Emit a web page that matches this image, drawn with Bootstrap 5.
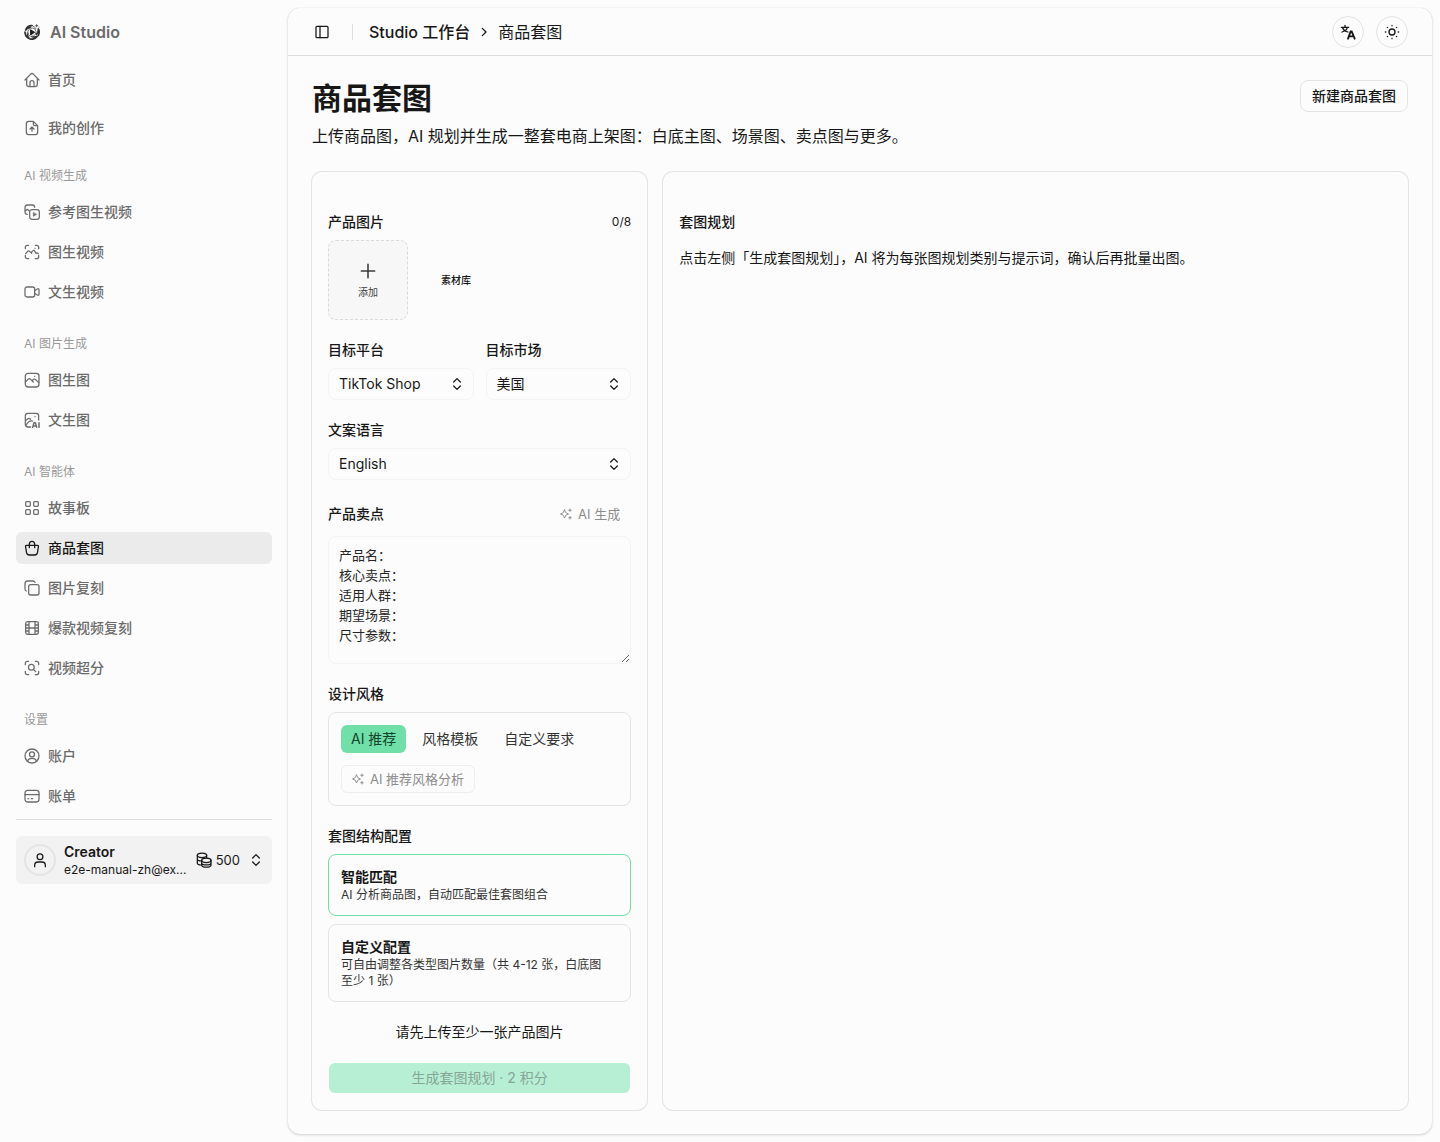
<!DOCTYPE html>
<html lang="zh-CN">
<head>
<meta charset="utf-8">
<meta name="viewport" content="width=device-width, initial-scale=1">
<title>商品套图 - AI Studio</title>
<link rel="stylesheet" href="https://cdn.jsdelivr.net/npm/bootstrap@5.3.0/dist/css/bootstrap.min.css">
<style>
:root{--ink:#171717;--soft:#6b6b6b;--faint:#999;--line:#e4e4e4;--page:#fcfcfc;--mint:#70e0a8}
body{background:var(--page);color:var(--ink);font-family:Inter,"Noto Sans CJK SC",sans-serif;font-size:14px;line-height:20px}
svg{display:block;flex:none;fill:none;stroke:currentColor;stroke-width:1.9;stroke-linecap:round;stroke-linejoin:round}
.i16{width:16px;height:16px}.i12{width:12px;height:12px}
.side-pane{flex:0 0 288px;padding:16px}
.brand-link{height:32px;padding:0 8px;gap:10px;font-size:16px;font-weight:600;color:var(--soft)}
.side-link{height:32px;padding:0 8px;gap:8px;border-radius:6px;color:var(--soft);font-weight:500}
.side-link.active{background:#ebebeb;color:var(--ink)}
.side-title{height:32px;line-height:32px;padding:0 8px;margin:0 0 4px;font-size:12px;font-weight:400;color:var(--faint)}
.side-nav{gap:16px}
.side-group+.side-group{margin-top:4px}
.side-rule{border-top:1px solid #dcdcdc;margin:7px 0 16px}
.user-box{height:48px;padding:0 8px;gap:8px;background:#f2f2f2;border:0;border-radius:6px;color:var(--ink)}
.user-pic{width:32px;height:32px;border-radius:50%;border:2px solid #e4e4e4}
.fs12{font-size:12px;line-height:16px}.fs13{font-size:13px}.fs16{font-size:16px;line-height:24px}
.medium{font-weight:500}
.main-pane{margin:8px 8px 8px 0;border-radius:12px;box-shadow:0 0 1px rgba(0,0,0,.18),0 1px 3px rgba(0,0,0,.16)}
.top-strip{height:48px;padding:0 24px 0 20px;border-bottom:1px solid #dedede}
.plain-btn{width:28px;height:28px;border:0;background:none;padding:0;color:var(--ink)}
.v-rule{width:1px;height:16px;background:#dedede;margin:0 16px}
.crumbs{gap:6px}
.gap12{gap:12px}
.round-btn{width:32px;height:32px;border:1px solid var(--line);border-radius:50%;background:var(--page);padding:0;color:var(--ink)}
.page-title{font-size:30px;line-height:36px;font-weight:700}
.line-btn{height:32px;padding:0 11px;border:1px solid var(--line);border-radius:8px;font-weight:500;font-size:14px;line-height:20px;color:var(--ink)}
.panels{display:grid;grid-template-columns:minmax(0,.45fr) minmax(0,1fr)}
.panel{border-radius:10px;box-shadow:0 0 0 1px var(--line);padding:40px 16px 16px}
.panel-form{gap:20px}
.field-name{font-size:14px;line-height:20px;font-weight:500;margin:0}
.tile{width:80px;height:80px;padding:0;font-size:10px;line-height:14px;border:0;background:none;color:var(--ink)}
.tile-add{border:1px dashed #d9d9d9;border-radius:8px;background:#f7f7f7;color:#3d3d3d}
.pick{height:32px;width:100%;appearance:none;border:1px solid #f3f3f3;border-radius:8px;background:var(--page);padding:0 32px 0 10px;font-size:14px;color:var(--ink)}
.pick-mark{right:9px;top:8px;pointer-events:none}
.notes{width:100%;height:128px;padding:8px 10px;border:1px solid #f3f3f3;border-radius:8px;background:var(--page);font-size:13px;line-height:20px;color:#262626}
.ai-btn{height:28px;padding:0 10px;gap:6px;border:1px solid transparent;border-radius:6px;background:none;font-size:13px;color:#8c8c8c}
.ai-btn.framed{border-color:#ededed}
.style-box{border:1px solid var(--line);border-radius:8px;padding:12px;gap:12px}
.segs{gap:6px}
.seg{height:28px;padding:0 10px;border:0;border-radius:6px;background:none;color:#333}
.seg.active{background:var(--mint);color:#14442c}
.choice{border:1px solid var(--line);border-radius:8px;padding:12px;background:none;text-align:left;color:#333}
.choice strong{font-weight:600;color:var(--ink);line-height:20px}
.choice.active{border-color:var(--mint)}
.go-btn{height:30px;margin:1px;border:0;border-radius:6px;background:#b7efd4;color:#86a596;font-size:14px}
</style>
</head>
<body>
<div class="d-flex align-items-stretch min-vh-100">

<aside class="side-pane d-flex flex-column">
  <a href="#" class="brand-link d-flex align-items-center text-decoration-none">
    <svg class="i16" viewBox="0 0 24 24">
      <g stroke="#333" stroke-width="2.600"><path d="M12 2.500Q5 2 2.500 9q3-4 7-3.500"/><path d="M1.500 12q0 7 6 9.500-3-3.500-2-8"/><path d="M9 22.500q7 1.500 11-4-4 2-8 .5"/><path d="M21.500 17q2.500-5 0-9.500.5 5-3 8"/></g>
      <path d="M14 3.500q3 1 4 3.500M16.500 7.500q3 4 .5 8t-7.500 3q-4-1.500-4-6 0-4 4-6 4-1.500 7 1" stroke="#777" stroke-width="1.500"/>
      <path d="M10 9v7l5.500-3.500z" fill="#222" stroke="#222"/><path d="M19 1v3M17.500 2.500h3M22.500 4.500v.1" stroke="#555" stroke-width="1.500"/>
    </svg>
    <span>AI Studio</span>
  </a>
  <nav class="side-nav d-flex flex-column mt-3">
    <a href="#" class="side-link d-flex align-items-center text-decoration-none"><svg class="i16" viewBox="0 0 24 24"><path d="M1.500 12 10 3.200q2-2 4 0L22.500 12M4 10v8.500q0 3.500 3.500 3.500h9q3.500 0 3.500-3.500V10M9 22v-6q0-3 3-3t3 3v6"/></svg>首页</a>
    <a href="#" class="side-link d-flex align-items-center text-decoration-none"><svg class="i16" viewBox="0 0 24 24"><path d="M14 2H7Q3.500 2 3.500 5.500v13Q3.500 22 7 22h10q3.500 0 3.500-3.500V8.500zM14 2v4q0 2.500 2.500 2.500h4M12 17v-6M9 13.500l3-3 3 3"/></svg>我的创作</a>
    <section class="side-group">
      <h2 class="side-title">AI 视频生成</h2>
      <div class="d-flex flex-column gap-2">
        <a href="#" class="side-link d-flex align-items-center text-decoration-none"><svg class="i16" viewBox="0 0 24 24"><path d="M5 15.500Q1.500 15.500 1.500 12V5Q1.500 1.500 5 1.500h7.500Q16 1.500 16 5M2 10.500l3-2.500 3 2"/><rect x="8.500" y="8.500" width="14.500" height="14.500" rx="3.500"/><path d="M14 13v5.500l4.500-2.700z" fill="currentColor" stroke-width="1"/></svg>参考图生视频</a>
        <a href="#" class="side-link d-flex align-items-center text-decoration-none"><svg class="i16" viewBox="0 0 24 24"><path d="M2 7V5q0-3 3-3h2M17 2h2q3 0 3 3v2M22 17v2q0 3-3 3h-2M7 22H5q-3 0-3-3v-2M2.500 14.500l3-3.500q1.500-1.500 3 0l3 3M11.500 12l2-2q1.500-1 2.500.5l2 3.500 1.500-1 2 1.500M16.500 6.500h.1"/></svg>图生视频</a>
        <a href="#" class="side-link d-flex align-items-center text-decoration-none"><svg class="i16" viewBox="0 0 24 24"><rect x="1.500" y="4.500" width="14.500" height="15" rx="3"/><path d="m16 10 4-2.500q2.500-1.200 2.500 1v7q0 2.200-2.500 1L16 14"/></svg>文生视频</a>
      </div>
    </section>
    <section class="side-group">
      <h2 class="side-title">AI 图片生成</h2>
      <div class="d-flex flex-column gap-2">
        <a href="#" class="side-link d-flex align-items-center text-decoration-none"><svg class="i16" viewBox="0 0 24 24"><rect x="2" y="2" width="20.500" height="20.500" rx="4"/><path d="m2 15 4-4q2-2 4 0l4 4M12 13l2.500-2q1.500-1 3 .5L22 16M16 6.500h.1"/></svg>图生图</a>
        <a href="#" class="side-link d-flex align-items-center text-decoration-none"><svg class="i16" viewBox="0 0 24 24"><path d="M10 22.500H6q-4 0-4-4V6q0-4 4-4h12q4 0 4 4v6M3 20q4-8 10-6.500M2 13l4-3q2-1 4 1M16.500 7h.1"/><path stroke-width="2.200" d="m13 23 2-7h2l2 7M14 21h4M22.500 16v7"/></svg>文生图</a>
      </div>
    </section>
    <section class="side-group">
      <h2 class="side-title">AI 智能体</h2>
      <div class="d-flex flex-column gap-2">
        <a href="#" class="side-link d-flex align-items-center text-decoration-none"><svg class="i16" viewBox="0 0 24 24"><rect x="2.500" y="2.500" width="7" height="7" rx="1.500"/><rect x="14.500" y="2.500" width="7" height="7" rx="1.500"/><rect x="2.500" y="14.500" width="7" height="7" rx="1.500"/><rect x="14.500" y="14.500" width="7" height="7" rx="1.500"/></svg>故事板</a>
        <a href="#" class="side-link active d-flex align-items-center text-decoration-none" aria-current="page"><svg class="i16" viewBox="0 0 24 24" stroke-width="2.200"><path d="M3.500 8h17q1.500 0 1.200 1.500l-1.500 9.500Q19.500 22.500 16 22.500H8Q4.500 22.500 3.800 19L2.300 9.500Q2 8 3.500 8zM8 11.500V6.500Q8 2 12 2t4 4.500v5"/></svg>商品套图</a>
        <a href="#" class="side-link d-flex align-items-center text-decoration-none"><svg class="i16" viewBox="0 0 24 24"><rect x="7" y="7" width="15.500" height="15.500" rx="3"/><path d="M3.500 16.500Q1.500 16 1.500 13V5.500q0-4 4-4H13q3 0 3.500 2"/></svg>图片复刻</a>
        <a href="#" class="side-link d-flex align-items-center text-decoration-none"><svg class="i16" viewBox="0 0 24 24"><rect x="2.500" y="2.500" width="19" height="19" rx="3"/><path d="M7.500 2.500v19M16.500 2.500v19M2.500 12h19M2.500 7.500h5M2.500 16.500h5M16.500 7.500h5M16.500 16.500h5"/></svg>爆款视频复刻</a>
        <a href="#" class="side-link d-flex align-items-center text-decoration-none"><svg class="i16" viewBox="0 0 24 24"><path d="M2 7V5q0-3 3-3h2M17 2h2q3 0 3 3v2M22 17v2q0 3-3 3h-2M7 22H5q-3 0-3-3v-2M14.500 14.500 17.500 17.500"/><circle cx="11" cy="11" r="4.300"/></svg>视频超分</a>
      </div>
    </section>
    <section class="side-group">
      <h2 class="side-title">设置</h2>
      <div class="d-flex flex-column gap-2">
        <a href="#" class="side-link d-flex align-items-center text-decoration-none"><svg class="i16" viewBox="0 0 24 24"><circle cx="12" cy="12" r="10.500"/><circle cx="12" cy="9.500" r="3.800"/><path d="M5.500 19q1.500-3.500 6.500-3.500t6.500 3.500"/></svg>账户</a>
        <a href="#" class="side-link d-flex align-items-center text-decoration-none"><svg class="i16" viewBox="0 0 24 24"><rect x="1.500" y="3.500" width="21" height="17.500" rx="4"/><path d="M1.500 10h21M6 16h1M11 16h2"/></svg>账单</a>
      </div>
    </section>
  </nav>
  <div class="side-rule"></div>
  <button type="button" class="user-box d-flex align-items-center text-start">
    <span class="user-pic d-flex align-items-center justify-content-center"><svg class="i16" viewBox="0 0 24 24" stroke-width="2.200"><circle cx="12" cy="7" r="4.300"/><path d="M4 22v-2q0-5 5-5h6q5 0 5 5v2"/></svg></span>
    <span class="d-flex flex-column flex-grow-1"><span class="fw-semibold">Creator</span><span class="fs12">e2e-manual-zh@ex...</span></span>
    <span class="d-flex align-items-center gap-1 fs13"><svg class="i16" viewBox="0 0 24 24"><ellipse cx="9" cy="5" rx="7" ry="3.300"/><path d="M2 5v12q0 2 4.500 2.500M2 11q0 2 4.500 2.500M16 5v3.500"/><ellipse cx="15.500" cy="12.500" rx="7" ry="3.300"/><path d="M8.500 12.500v7q0 3.300 7 3.300t7-3.300v-7M8.500 16q0 3.300 7 3.300t7-3.300"/></svg>500</span>
    <svg class="i16" viewBox="0 0 24 24" stroke-width="2"><path d="m7 9 5-5 5 5M7 15l5 5 5-5"/></svg>
  </button>
</aside>

<main class="main-pane flex-grow-1 d-flex flex-column">
  <header class="top-strip d-flex align-items-center">
    <button type="button" class="plain-btn d-flex align-items-center justify-content-center" aria-label="切换侧边栏"><svg class="i16" viewBox="0 0 24 24" stroke-width="2.200"><rect x="3" y="3.500" width="18" height="17" rx="1.500"/><path d="M9 3.500v17"/></svg></button>
    <div class="v-rule"></div>
    <nav class="crumbs d-flex align-items-center fs16">
      <a href="#" class="medium text-reset text-decoration-none">Studio 工作台</a>
      <svg class="i16" viewBox="0 0 24 24" stroke-width="2"><path d="m9.500 6.500 5.500 5.500-5.500 5.500"/></svg>
      <span>商品套图</span>
    </nav>
    <div class="gap12 d-flex ms-auto">
      <button type="button" class="round-btn d-flex align-items-center justify-content-center" aria-label="语言"><svg class="i16" viewBox="0 0 24 24" stroke-width="2.400" stroke-linecap="butt"><path d="M2 5h11M7.500 2v3M11 5.500q-1.500 5-8 6.500M4 6q2 5 8 6"/><path stroke-width="2.800" stroke-linejoin="miter" d="m12 22 4-11h1.500l4.500 11M13.500 18.500h7"/></svg></button>
      <button type="button" class="round-btn d-flex align-items-center justify-content-center" aria-label="主题"><svg class="i16" viewBox="0 0 24 24" stroke-width="2.400"><circle cx="12" cy="12" r="4.500"/><path d="M12 2v.6M12 21.400v.6M2 12h.6M21.400 12h.6M5 5l.4.4M18.600 18.600l.4.4M5 19l.4-.4M18.600 5.400l.4-.4"/></svg></button>
    </div>
  </header>

  <div class="d-flex flex-column flex-grow-1 p-4 gap-4">
    <div class="d-flex justify-content-between align-items-start">
      <div>
        <h1 class="page-title mb-2">商品套图</h1>
        <p class="fs16 mb-0">上传商品图，AI 规划并生成一整套电商上架图：白底主图、场景图、卖点图与更多。</p>
      </div>
      <button type="button" class="btn line-btn">新建商品套图</button>
    </div>

    <div class="panels gap-3 flex-grow-1">
      <form class="panel panel-form d-flex flex-column">
        <div>
          <div class="d-flex justify-content-between align-items-center mb-2"><h2 class="field-name">产品图片</h2><span class="fs12">0/8</span></div>
          <div class="d-flex gap-2">
            <button type="button" class="tile tile-add d-flex flex-column align-items-center justify-content-center gap-1"><svg width="20" height="20" viewBox="0 0 24 24" stroke="#171717"><path d="M12 4v16M4 12h16"/></svg>添加</button>
            <button type="button" class="tile medium">素材库</button>
          </div>
        </div>
        <div class="gap12 d-flex">
          <div class="w-50"><label class="field-name d-block mb-2" for="platform">目标平台</label>
            <div class="position-relative"><select id="platform" class="pick"><option>TikTok Shop</option></select><svg class="i16 pick-mark position-absolute" viewBox="0 0 24 24" stroke-width="2"><path d="m7 9 5-5 5 5M7 15l5 5 5-5"/></svg></div></div>
          <div class="w-50"><label class="field-name d-block mb-2" for="market">目标市场</label>
            <div class="position-relative"><select id="market" class="pick"><option>美国</option></select><svg class="i16 pick-mark position-absolute" viewBox="0 0 24 24" stroke-width="2"><path d="m7 9 5-5 5 5M7 15l5 5 5-5"/></svg></div></div>
        </div>
        <div><label class="field-name d-block mb-2" for="lang">文案语言</label>
          <div class="position-relative"><select id="lang" class="pick"><option>English</option></select><svg class="i16 pick-mark position-absolute" viewBox="0 0 24 24" stroke-width="2"><path d="m7 9 5-5 5 5M7 15l5 5 5-5"/></svg></div></div>
        <div>
          <div class="d-flex justify-content-between align-items-center mb-2"><label class="field-name" for="points">产品卖点</label>
            <button type="button" class="ai-btn d-flex align-items-center" disabled><svg class="i12" viewBox="0 0 24 24" stroke-width="2.400"><path d="M9 4q1 7 8 8-7 1-8 8-1-7-8-8 7-1 8-8zM20 2v5M17.500 4.500h5M20 17v5M17.500 19.500h5"/></svg>AI 生成</button></div>
          <textarea id="points" class="notes d-block">产品名：
核心卖点：
适用人群：
期望场景：
尺寸参数：</textarea>
        </div>
        <div>
          <h2 class="field-name mb-2">设计风格</h2>
          <div class="style-box d-flex flex-column align-items-start">
            <div class="segs d-flex"><button type="button" class="seg active">AI 推荐</button><button type="button" class="seg">风格模板</button><button type="button" class="seg">自定义要求</button></div>
            <button type="button" class="ai-btn framed d-flex align-items-center" disabled><svg class="i12" viewBox="0 0 24 24" stroke-width="2.400"><path d="M9 4q1 7 8 8-7 1-8 8-1-7-8-8 7-1 8-8zM20 2v5M17.500 4.500h5M20 17v5M17.500 19.500h5"/></svg>AI 推荐风格分析</button>
          </div>
        </div>
        <div>
          <h2 class="field-name mb-2">套图结构配置</h2>
          <div class="d-flex flex-column gap-2">
            <button type="button" class="choice active d-flex flex-column"><strong>智能匹配</strong><span class="fs12">AI 分析商品图，自动匹配最佳套图组合</span></button>
            <button type="button" class="choice d-flex flex-column"><strong>自定义配置</strong><span class="fs12">可自由调整各类型图片数量（共 4-12 张，白底图<span class="text-nowrap">至少 1 张）</span></span></button>
          </div>
        </div>
        <p class="text-center mb-0">请先上传至少一张产品图片</p>
        <button type="submit" class="go-btn" disabled>生成套图规划 · 2 积分</button>
      </form>

      <section class="panel">
        <h2 class="field-name mb-3">套图规划</h2>
        <p class="mb-0">点击左侧「生成套图规划」，AI 将为每张图规划类别与提示词，确认后再批量出图。</p>
      </section>
    </div>
  </div>
</main>
</div>
<script src="https://cdn.jsdelivr.net/npm/bootstrap@5.3.0/dist/js/bootstrap.bundle.min.js"></script>
</body>
</html>
